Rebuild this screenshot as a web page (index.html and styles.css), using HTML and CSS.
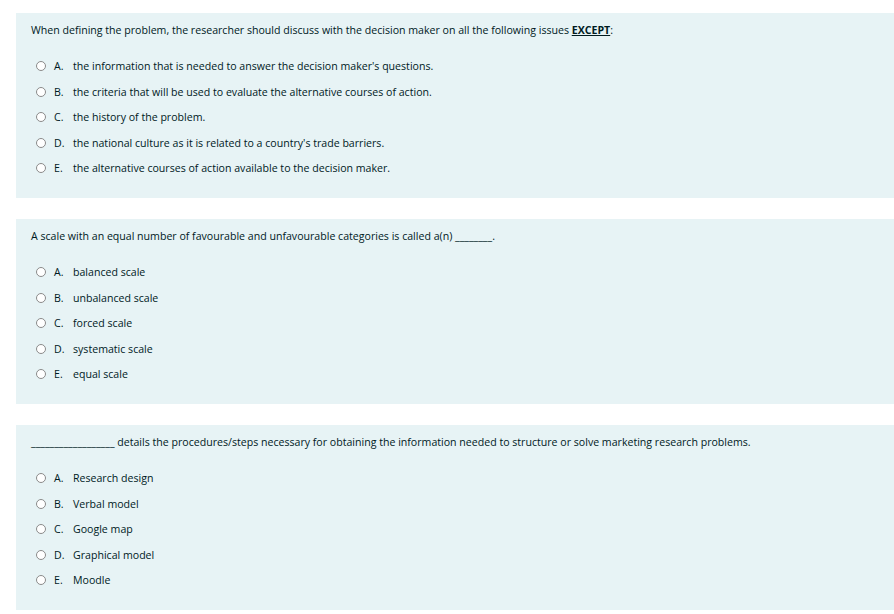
FILE: index.html
```html
<!DOCTYPE html>
<html lang="en">
<head>
<meta charset="utf-8">
<title>Quiz</title>
<link rel="stylesheet" href="styles.css">
</head>
<body>
<main class="quiz">
  <section class="que">
    <p class="qtext">When defining the problem, the researcher should discuss with the decision maker on all the following issues <u class="em">EXCEPT</u>:</p>
    <div class="answer">
      <label class="opt"><span class="radio"></span><span class="letter">A.</span><span class="text">the information that is needed to answer the decision maker's questions.</span></label>
      <label class="opt"><span class="radio"></span><span class="letter">B.</span><span class="text">the criteria that will be used to evaluate the alternative courses of action.</span></label>
      <label class="opt"><span class="radio"></span><span class="letter">C.</span><span class="text">the history of the problem.</span></label>
      <label class="opt"><span class="radio"></span><span class="letter">D.</span><span class="text">the national culture as it is related to a country's trade barriers.</span></label>
      <label class="opt"><span class="radio"></span><span class="letter">E.</span><span class="text">the alternative courses of action available to the decision maker.</span></label>
    </div>
  </section>
  <section class="que">
    <p class="qtext">A scale with an equal number of favourable and unfavourable categories is called a(n) ________.</p>
    <div class="answer">
      <label class="opt"><span class="radio"></span><span class="letter">A.</span><span class="text">balanced scale</span></label>
      <label class="opt"><span class="radio"></span><span class="letter">B.</span><span class="text">unbalanced scale</span></label>
      <label class="opt"><span class="radio"></span><span class="letter">C.</span><span class="text">forced scale</span></label>
      <label class="opt"><span class="radio"></span><span class="letter">D.</span><span class="text">systematic scale</span></label>
      <label class="opt"><span class="radio"></span><span class="letter">E.</span><span class="text">equal scale</span></label>
    </div>
  </section>
  <section class="que">
    <p class="qtext">__________________ details the procedures/steps necessary for obtaining the information needed to structure or solve marketing research problems.</p>
    <div class="answer">
      <label class="opt"><span class="radio"></span><span class="letter">A.</span><span class="text">Research design</span></label>
      <label class="opt"><span class="radio"></span><span class="letter">B.</span><span class="text">Verbal model</span></label>
      <label class="opt"><span class="radio"></span><span class="letter">C.</span><span class="text">Google map</span></label>
      <label class="opt"><span class="radio"></span><span class="letter">D.</span><span class="text">Graphical model</span></label>
      <label class="opt"><span class="radio"></span><span class="letter">E.</span><span class="text">Moodle</span></label>
    </div>
  </section>
</main>
</body>
</html>
```
FILE: styles.css
```css
html, body {
  margin: 0;
  padding: 0;
  background: #ffffff;
}
body {
  font-family: "Open Sans", "Noto Sans", sans-serif;
  font-size: 10.6px;
  color: #001a1e;
  overflow: hidden;
}
.quiz {
  display: flex;
  flex-direction: column;
  gap: 21px;
  padding: 13px 0 0 16px;
}
.que {
  background: #e7f3f5;
  padding: 10px 15px 16px 15px;
  height: 185px;
  box-sizing: border-box;
}
.qtext {
  margin: 0;
  line-height: 14px;
  white-space: nowrap;
}
.em {
  font-weight: 700;
  text-decoration: underline;
}
.answer {
  display: flex;
  flex-direction: column;
  margin-top: 16.5px;
}
.opt {
  display: flex;
  align-items: center;
  height: 25.5px;
  padding-left: 5px;
}
.radio {
  width: 8px;
  height: 8px;
  border: 1px solid #8a8a8a;
  border-radius: 50%;
  background: #ffffff;
  flex: none;
}
.letter {
  margin-left: 8px;
  width: 19px;
}
.text {
  white-space: nowrap;
}
```
